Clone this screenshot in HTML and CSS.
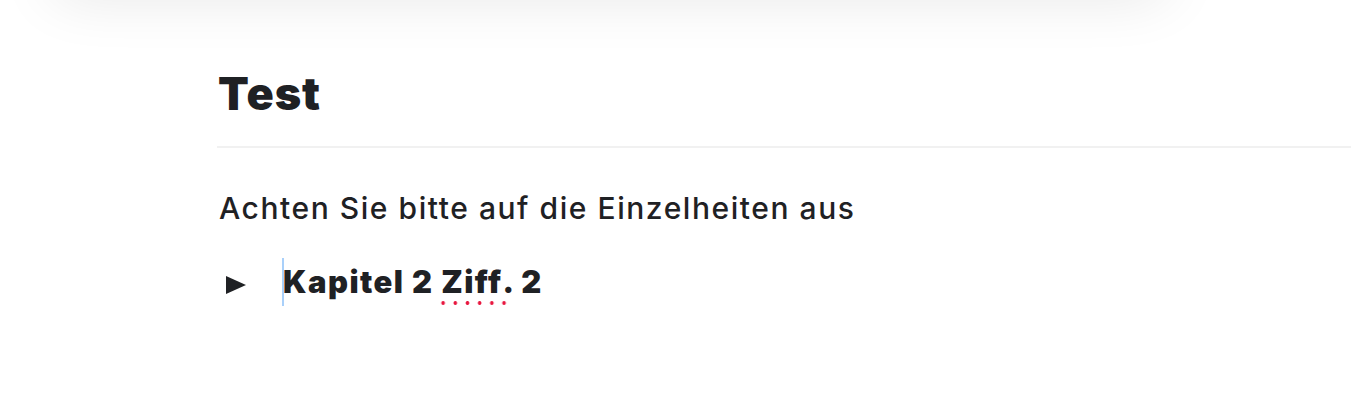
FILE: index.html
```html
<!DOCTYPE html>
<html lang="de">
<head>
    <meta charset="UTF-8">
    <title>Test</title>
    <link rel="stylesheet" href="styles.css">
</head>
<body>
    <div class="toolbar"></div>
    <main class="page">
        <h1 class="page-title">Test</h1>
        <div class="editor">
            <p class="paragraph">Achten Sie bitte auf die Einzelheiten aus</p>
            <div class="toggle">
                <span class="toggle-arrow">
                    <svg width="20" height="18" viewBox="0 0 20 18"><path d="M0 0 L20 9 L0 18 Z" fill="#1f2124"/></svg>
                </span>
                <h2 class="toggle-title"><span class="caret"></span>Kapitel 2 <span class="misspelled">Ziff</span>. 2</h2>
            </div>
        </div>
    </main>
</body>
</html>
```

FILE: styles.css
```css
body {
    margin: 0;
    background: #ffffff;
    font-family: 'Inter', 'Liberation Sans', sans-serif;
    color: #1f2124;
    overflow: hidden;
}

.toolbar {
    position: absolute;
    top: -52px;
    left: 50px;
    width: 1120px;
    height: 48px;
    border-radius: 30px;
    background: #fff;
    box-shadow: 0 0 60px rgba(0, 0, 0, 0.11);
}

.page {
    padding: 64px 0 0 217px;
}

.page-title {
    margin: 0;
    padding: 0 0 22px 1px;
    font-size: 45px;
    font-weight: 900;
    line-height: 60px;
    letter-spacing: 1px;
    border-bottom: 2px solid #f1f1f1;
}

.editor {
    padding: 40px 0 0 0;
}

.paragraph {
    margin: 0;
    padding-left: 2px;
    font-size: 30px;
    font-weight: 500;
    line-height: 40px;
    letter-spacing: 1.55px;
}

.toggle {
    display: flex;
    align-items: center;
    margin-top: 30px;
}

.toggle-arrow {
    display: flex;
    width: 56px;
    margin: 6px 0 0 9px;
}

.toggle-title {
    position: relative;
    margin: 0;
    padding-left: 1px;
    font-size: 31px;
    font-weight: 900;
    line-height: 48px;
    letter-spacing: 1.45px;
}

.caret {
    position: absolute;
    left: 0;
    top: 0;
    width: 2px;
    height: 48px;
    background: #a9d0fa;
}

.misspelled {
    position: relative;
}

.misspelled::after {
    content: "";
    position: absolute;
    left: -4px;
    bottom: -5px;
    width: 73.2px;
    height: 4px;
    background: radial-gradient(circle, #e8173f 1.6px, transparent 2.1px) 0 0 / 12.2px 4px repeat-x;
}
```
